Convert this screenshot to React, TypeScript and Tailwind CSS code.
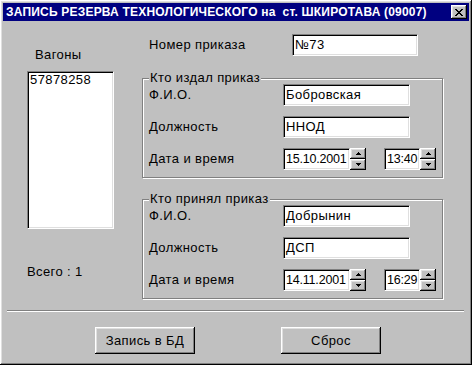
const raised =
  "shadow-[inset_-1px_-1px_0_#000,inset_1px_1px_0_#fff,inset_-2px_-2px_0_#808080,inset_2px_2px_0_#dfdfdf]";
const sunken =
  "border border-t-[#808080] border-l-[#808080] border-b-white border-r-white shadow-[inset_1px_1px_0_#000,inset_-1px_-1px_0_#dfdfdf]";

function Field({ value, className = "" }: { value: string; className?: string }) {
  return (
    <div className={`h-[22px] bg-white ${sunken} flex items-center pl-[2px] overflow-hidden whitespace-nowrap ${className}`}>
      <span className="leading-[16px]">{value}</span>
    </div>
  );
}

function Spinner() {
  return (
    <div className="flex flex-col h-[22px] w-[16px]">
      <div className={`flex-1 bg-[#c0c0c0] ${raised} flex items-center justify-center`}>
        <svg width="5" height="3" viewBox="0 0 5 3" shapeRendering="crispEdges">
          <path d="M2 0h1v1h1v1h1v1H0V2h1V1h1z" fill="#000" />
        </svg>
      </div>
      <div className={`flex-1 bg-[#c0c0c0] ${raised} flex items-center justify-center`}>
        <svg width="5" height="3" viewBox="0 0 5 3" shapeRendering="crispEdges">
          <path d="M0 0h5v1H4v1H3v1H2V2H1V1H0z" fill="#000" />
        </svg>
      </div>
    </div>
  );
}

function Group({
  title,
  fio,
  post,
  date,
  time,
}: {
  title: string;
  fio: string;
  post: string;
  date: string;
  time: string;
}) {
  return (
    <div className="relative w-[301px] h-[100px] border border-[#808080] shadow-[1px_1px_0_#fff,inset_1px_1px_0_#fff] pt-[5px] pl-[6px] flex flex-col gap-[10px]">
      <span className="absolute left-[6px] top-[-9px] px-[1px] bg-[#c0c0c0] leading-[16px]">{title}</span>
      <div className="flex items-center">
        <span className="w-[134px]">Ф.И.О.</span>
        <Field value={fio} className="w-[127px]" />
      </div>
      <div className="flex items-center">
        <span className="w-[134px]">Должность</span>
        <Field value={post} className="w-[127px]" />
      </div>
      <div className="flex items-center">
        <span className="w-[134px]">Дата и время</span>
        <Field value={date} className="w-[67px] text-[12.5px] tracking-[-0.2px]" />
        <Spinner />
        <Field value={time} className="w-[36px] ml-[18px] text-[12.5px] tracking-[-0.2px]" />
        <Spinner />
      </div>
    </div>
  );
}

export default function App() {
  return (
    <div
      className="w-[472px] h-[365px] bg-[#c0c0c0] text-black text-[13px] leading-[16px] tracking-[0.4px]"
      style={{ fontFamily: '"Liberation Sans", Arial, sans-serif' }}
    >
      <div className={`w-[472px] h-[365px] p-[3px] flex flex-col ${raised}`}>
        {/* Title bar */}
        <div className="h-[18px] bg-[#000080] flex items-center pl-[3px] pr-[2px]">
          <span className="flex-1 text-white font-bold text-[12px] tracking-[0.2px] whitespace-pre">
            ЗАПИСЬ РЕЗЕРВА ТЕХНОЛОГИЧЕСКОГО на  ст. ШКИРОТАВА (09007)
          </span>
          <div className={`w-[16px] h-[14px] bg-[#c0c0c0] ${raised} flex items-center justify-center`}>
            <svg width="8" height="7" viewBox="0 0 8 7" shapeRendering="crispEdges">
              <path
                d="M0 0h2v1h1v1h2V1h1V0h2v1H7v1H6v1H5v1h1v1h1v1h1v1H6V6H5V5H3v1H2v1H0V6h1V5h1V4h1V3H2V2H1V1H0z"
                fill="#000"
              />
            </svg>
          </div>
        </div>

        {/* Main area */}
        <div className="h-[289px] flex">
          {/* Left column */}
          <div className="ml-[24px] w-[87px] pt-[26px] flex flex-col">
            <span className="pl-[8px]">Вагоны</span>
            <div className={`mt-[8px] h-[158px] bg-white ${sunken} pl-[2px]`}>57878258</div>
            <span className="mt-[35px]">Всего : 1</span>
          </div>

          {/* Right column */}
          <div className="ml-[28px] pt-[13px] flex flex-col">
            <div className="flex items-center pl-[7px]">
              <span className="w-[143px]">Номер приказа</span>
              <Field value="№73" className="w-[126px]" />
            </div>
            <div className="mt-[22px]">
              <Group title="Кто издал приказ" fio="Бобровская" post="ННОД" date="15.10.2001" time="13:40" />
            </div>
            <div className="mt-[21px]">
              <Group title="Кто принял приказ" fio="Добрынин" post="ДСП" date="14.11.2001" time="16:29" />
            </div>
          </div>
        </div>

        {/* Separator */}
        <div className="ml-[4px] w-[457px] h-[2px] border-t border-t-[#808080] border-b border-b-white" />

        {/* Buttons */}
        <div className="flex mt-[15px] ml-[92px] gap-[86px]">
          <button className={`w-[100px] h-[27px] bg-[#c0c0c0] ${raised}`}>Запись в БД</button>
          <button className={`w-[100px] h-[27px] bg-[#c0c0c0] ${raised}`}>Сброс</button>
        </div>
      </div>
    </div>
  );
}
